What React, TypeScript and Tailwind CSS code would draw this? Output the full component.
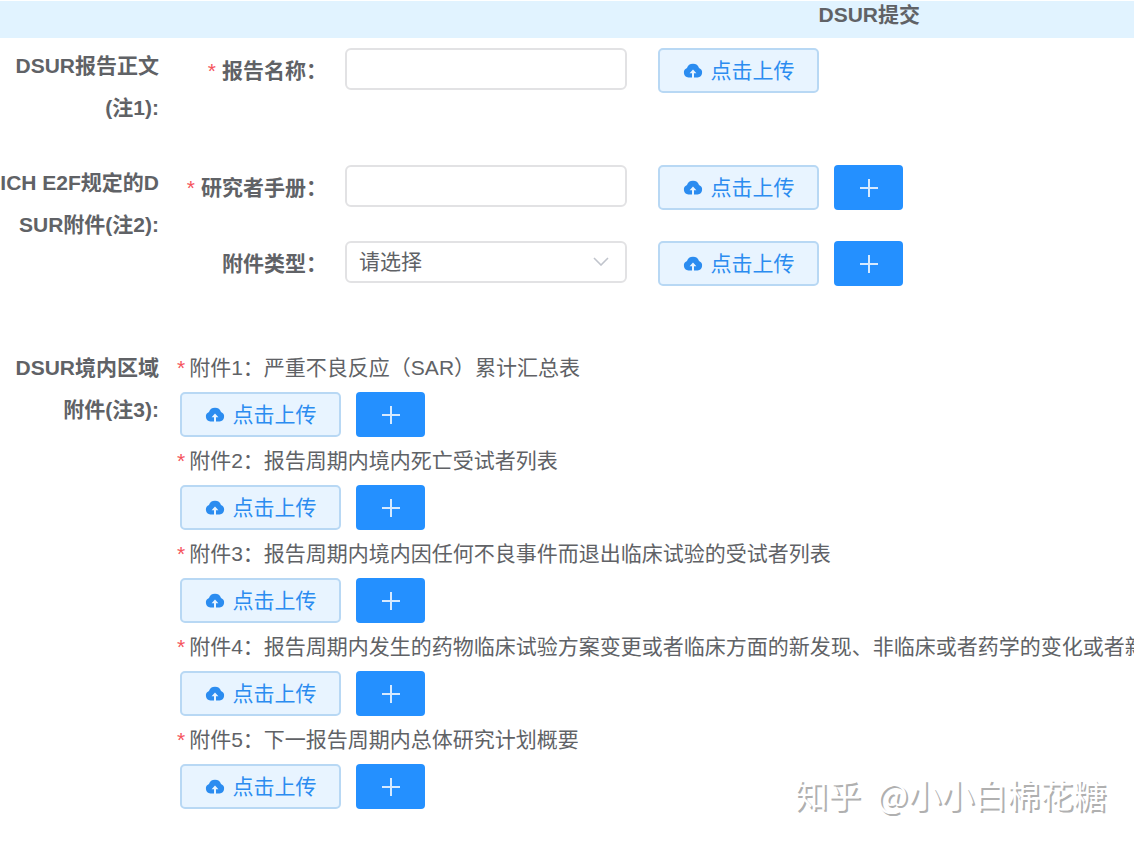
import type { ReactNode } from "react";

function CloudUploadIcon() {
  return (
    <svg viewBox="0 0 20 16" className="h-4 w-5 shrink-0" aria-hidden="true">
      <path
        fill="currentColor"
        fillRule="evenodd"
        d="M4 5A6.2 5.8 0 0 1 16 5A5 5 0 0 1 14.6 14.6H5.4A5 5 0 0 1 4 5ZM10 6.6L6.6 10.2H9V14.6H11V10.2H13.4Z"
      />
    </svg>
  );
}

function UploadButton() {
  return (
    <button
      type="button"
      className="flex h-[45px] w-[161px] shrink-0 items-center justify-center gap-2 rounded-[5px] border-2 border-[#b8d8f4] bg-[#e8f4ff] text-[#2b8cf0]"
    >
      <CloudUploadIcon />
      点击上传
    </button>
  );
}

function AddButton() {
  return (
    <button
      type="button"
      aria-label="+"
      className="flex h-[45px] w-[69px] shrink-0 items-center justify-center rounded bg-[#2490ff] text-[#d6eaff]"
    >
      <svg viewBox="0 0 18 18" className="size-[18px]" aria-hidden="true">
        <path d="M9 0V18M0 9H18" stroke="currentColor" strokeWidth="2" />
      </svg>
    </button>
  );
}

function Actions({ add = true }: { add?: boolean }) {
  return (
    <div className="flex gap-[15px]">
      <UploadButton />
      {add && <AddButton />}
    </div>
  );
}

function Section({ lines, className, children }: { lines: [string, string]; className?: string; children: ReactNode }) {
  return (
    <section className={`flex gap-[18px] ${className ?? ""}`}>
      <h2 className="flex w-[159px] shrink-0 flex-col items-end font-bold leading-[42px] whitespace-nowrap">
        <span>{lines[0]}</span>
        <span>{lines[1]}</span>
      </h2>
      {children}
    </section>
  );
}

function Row({ id, label, required, add, children }: { id: string; label: string; required?: boolean; add?: boolean; children: ReactNode }) {
  return (
    <div className="flex">
      <label htmlFor={id} className="mr-[18px] flex w-[150px] shrink-0 items-center justify-end gap-1.5 font-bold whitespace-nowrap">
        {required && <span className="font-normal text-[#f5545c]">*</span>}
        {label}
      </label>
      <div className="mr-[31px] w-[282px] shrink-0">{children}</div>
      <Actions add={add} />
    </div>
  );
}

const field = "h-[42px] w-full rounded-md border-2 border-[#e2e2e4] bg-white px-3 text-[#606266]";

const attachments = [
  "附件1：严重不良反应（SAR）累计汇总表",
  "附件2：报告周期内境内死亡受试者列表",
  "附件3：报告周期内境内因任何不良事件而退出临床试验的受试者列表",
  "附件4：报告周期内发生的药物临床试验方案变更或者临床方面的新发现、非临床或者药学的变化或者新",
  "附件5：下一报告周期内总体研究计划概要",
];

export default function App() {
  return (
    <div className="relative min-h-screen overflow-hidden bg-white pt-px pb-8 font-['Liberation_Sans','Noto_Sans_CJK_SC',sans-serif] text-[21px] leading-[30px] text-[#606266]">
      <header className="flex h-[37px] justify-end bg-[#e1f3ff] pr-[214px]">
        <h1 className="font-bold leading-7">DSUR提交</h1>
      </header>
      <main className="pt-[7px]">
        <Section lines={["DSUR报告正文", "(注1):"]} className="mb-[33px]">
          <div className="pt-[3px]">
            <Row id="report-name" label="报告名称：" required add={false}>
              <input id="report-name" type="text" className={field} />
            </Row>
          </div>
        </Section>
        <Section lines={["ICH E2F规定的D", "SUR附件(注2):"]} className="mb-[61px]">
          <div className="flex flex-col gap-[31px] pt-[3px]">
            <Row id="brochure" label="研究者手册：" required>
              <input id="brochure" type="text" className={field} />
            </Row>
            <Row id="attachment-type" label="附件类型：">
              <div className="relative">
                <select id="attachment-type" className={`${field} appearance-none`}>
                  <option>请选择</option>
                </select>
                <svg viewBox="0 0 16 9" className="pointer-events-none absolute top-4 right-[18px] h-[9px] w-4" aria-hidden="true">
                  <path d="M1 1L8 8L15 1" fill="none" stroke="#c0c4cc" strokeWidth="1.6" />
                </svg>
              </div>
            </Row>
          </div>
        </Section>
        <Section lines={["DSUR境内区域", "附件(注3):"]}>
          <ul className="flex flex-col gap-[3px]">
            {attachments.map((text) => (
              <li key={text}>
                <p className="flex h-[42px] items-center gap-1 whitespace-nowrap">
                  <span className="text-[#f5545c]">*</span>
                  {text}
                </p>
                <div className="pt-[3px] pl-[3px]">
                  <Actions />
                </div>
              </li>
            ))}
          </ul>
        </Section>
      </main>
      <p className="absolute right-7 bottom-[26px] flex gap-4 font-['Noto_Sans_CJK_SC',sans-serif] text-[33px] leading-[44px] whitespace-nowrap text-white [text-shadow:2px_2px_0_#b0b0b0]">
        <span>知乎</span>
        <span>@小小白棉花糖</span>
      </p>
    </div>
  );
}
